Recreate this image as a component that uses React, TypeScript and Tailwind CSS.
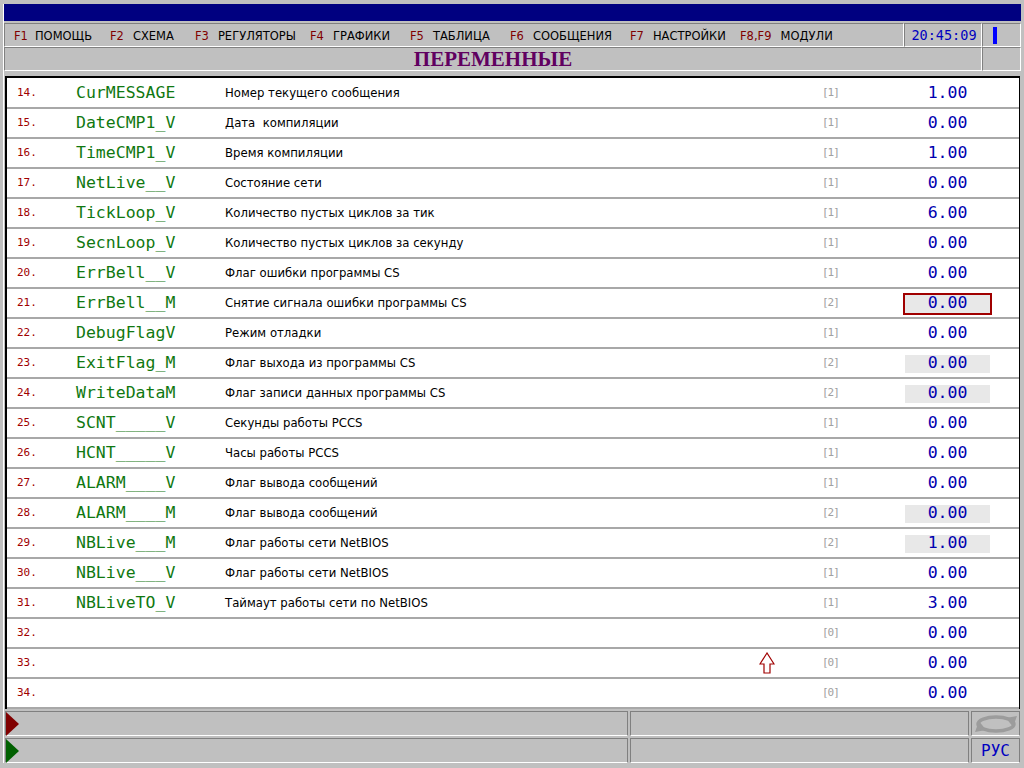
import React from "react";

type Row = {
  n: number;
  name: string;
  desc: string;
  br: string;
  val: string;
  kind?: "box" | "red";
};

const rows: Row[] = [
  { n: 14, name: "CurMESSAGE", desc: "Номер текущего сообщения", br: "[1]", val: "1.00" },
  { n: 15, name: "DateCMP1_V", desc: "Дата\u00a0 компиляции", br: "[1]", val: "0.00" },
  { n: 16, name: "TimeCMP1_V", desc: "Время компиляции", br: "[1]", val: "1.00" },
  { n: 17, name: "NetLive__V", desc: "Состояние сети", br: "[1]", val: "0.00" },
  { n: 18, name: "TickLoop_V", desc: "Количество пустых циклов за тик", br: "[1]", val: "6.00" },
  { n: 19, name: "SecnLoop_V", desc: "Количество пустых циклов за секунду", br: "[1]", val: "0.00" },
  { n: 20, name: "ErrBell__V", desc: "Флаг ошибки программы CS", br: "[1]", val: "0.00" },
  { n: 21, name: "ErrBell__M", desc: "Снятие сигнала ошибки программы CS", br: "[2]", val: "0.00", kind: "red" },
  { n: 22, name: "DebugFlagV", desc: "Режим отладки", br: "[1]", val: "0.00" },
  { n: 23, name: "ExitFlag_M", desc: "Флаг выхода из программы CS", br: "[2]", val: "0.00", kind: "box" },
  { n: 24, name: "WriteDataM", desc: "Флаг записи данных программы CS", br: "[2]", val: "0.00", kind: "box" },
  { n: 25, name: "SCNT_____V", desc: "Секунды работы PCCS", br: "[1]", val: "0.00" },
  { n: 26, name: "HCNT_____V", desc: "Часы работы PCCS", br: "[1]", val: "0.00" },
  { n: 27, name: "ALARM____V", desc: "Флаг вывода сообщений", br: "[1]", val: "0.00" },
  { n: 28, name: "ALARM____M", desc: "Флаг вывода сообщений", br: "[2]", val: "0.00", kind: "box" },
  { n: 29, name: "NBLive___M", desc: "Флаг работы сети NetBIOS", br: "[2]", val: "1.00", kind: "box" },
  { n: 30, name: "NBLive___V", desc: "Флаг работы сети NetBIOS", br: "[1]", val: "0.00" },
  { n: 31, name: "NBLiveTO_V", desc: "Таймаут работы сети по NetBIOS", br: "[1]", val: "3.00" },
  { n: 32, name: "", desc: "", br: "[0]", val: "0.00" },
  { n: 33, name: "", desc: "", br: "[0]", val: "0.00" },
  { n: 34, name: "", desc: "", br: "[0]", val: "0.00" },
];

const menu: { k: string; label: string; w: string; g: string }[] = [
  { k: "F1", label: "ПОМОЩЬ", w: "w-[96px]", g: "ml-[7px]" },
  { k: "F2", label: "СХЕМА", w: "w-[85px]", g: "ml-[9px]" },
  { k: "F3", label: "РЕГУЛЯТОРЫ", w: "w-[115px]", g: "ml-[9px]" },
  { k: "F4", label: "ГРАФИКИ", w: "w-[100px]", g: "ml-[9px]" },
  { k: "F5", label: "ТАБЛИЦА", w: "w-[100px]", g: "ml-[9px]" },
  { k: "F6", label: "СООБЩЕНИЯ", w: "w-[120px]", g: "ml-[9px]" },
  { k: "F7", label: "НАСТРОЙКИ", w: "w-[110px]", g: "ml-[9px]" },
  { k: "F8,F9", label: "МОДУЛИ", w: "w-[120px]", g: "ml-[9px]" },
];

const mono = "font-['DejaVu_Sans_Mono',monospace]";
const sans = "font-['DejaVu_Sans',sans-serif]";
const sunken =
  "border-t border-l border-[#808080] border-r border-b border-r-white border-b-white";

export default function App() {
  return (
    <div className="relative w-[1024px] h-[768px] bg-[#c0c0c0] overflow-hidden pl-[3px] pt-[4px] pr-[3px]">
      <div className="border-l border-white">
        {/* title bar */}
        <div className="h-[17px] bg-[#000080]" />
        {/* menu row */}
        <div className="mt-[2px] flex h-[24px]">
          <div className={`w-[900px] h-full flex items-center pl-[9px] pt-[3px] ${sunken} ${sans} text-[11.5px]`}>
            {menu.map((m) => (
              <div key={m.k} className={`${m.w} flex items-center shrink-0 whitespace-nowrap`}>
                <span className="text-[#800000]">{m.k}</span>
                <span className={`${m.g} text-black`}>{m.label}</span>
              </div>
            ))}
          </div>
          <div className={`w-[78px] h-full flex items-center justify-center pl-[2px] pt-[1px] ${sunken} ${mono} text-[13.5px] text-[#0000c0]`}>
            20:45:09
          </div>
          <div className={`flex-1 h-full flex items-center ${sunken}`}>
            <div className="ml-[10px] w-[4px] h-[17px] bg-[#0000ff]" />
          </div>
        </div>
        {/* header row */}
        <div className="flex h-[24px]">
          <div className={`w-[978px] h-full flex items-center justify-center ${sunken} font-['Liberation_Serif',serif] font-bold text-[21px] text-[#600060] leading-none`}>
            ПЕРЕМЕННЫЕ
          </div>
          <div className={`flex-1 h-full ${sunken}`} />
        </div>
        {/* table */}
        <div className="mt-[5px] ml-[1px] w-[1015px] h-[633px] pt-[1px] bg-white border-l-2 border-t-2 border-r border-black">
          {rows.map((r) => (
            <div key={r.n} className="flex items-center h-[30px] pt-[1px] border-b-2 border-[#a8a8a8]">
              <div className={`w-[69px] pl-[10px] ${mono} text-[11px] text-[#a00000]`}>{r.n}.</div>
              <div className={`w-[149px] ${mono} text-[16.5px] text-[#107810] whitespace-pre`}>{r.name}</div>
              <div className={`w-[597px] ${sans} text-[11.7px] text-black whitespace-pre`}>{r.desc}</div>
              <div className={`w-[83px] ${mono} text-[11px] tracking-[-1px] text-[#a0a0a0]`}>{r.br}</div>
              <div
                className={`flex items-center justify-center ${mono} text-[16.5px] text-[#0000b0] ${
                  r.kind === "red"
                    ? "w-[89px] h-[22px] -ml-[2px] bg-[#e8e8e8] border-2 border-[#a00000]"
                    : r.kind === "box"
                    ? "w-[85px] h-[18px] bg-[#e8e8e8]"
                    : "w-[85px] h-[18px]"
                }`}
              >
                {r.val}
              </div>
            </div>
          ))}
        </div>
        {/* status rows */}
        {[0, 1].map((i) => (
          <div key={i} className="flex h-[25px] mt-[2px] gap-[2px] ml-[1px]">
            <div className="relative w-[623px] h-full border-t border-l border-[#808080] border-r border-b border-r-[#808080] border-b-white">
              <svg className="absolute left-0 top-0" width="14" height="24" viewBox="0 0 14 24">
                <polygon points="0,0 13,12 0,24" fill={i === 0 ? "#800000" : "#006000"} />
              </svg>
            </div>
            <div className="w-[339px] h-full border-t border-l border-[#808080] border-r border-b border-r-[#808080] border-b-white" />
            <div className={`w-[49px] h-full flex items-center justify-center border-t border-l border-[#808080] border-r border-b border-r-[#808080] border-b-white ${mono} text-[16px] text-[#0000c0]`}>
              {i === 0 ? (
                <svg width="46" height="22" viewBox="0 0 46 22">
                  <ellipse cx="23" cy="11" rx="18" ry="7" fill="none" stroke="#9c9c9c" strokeWidth="3.5" />
                  <polygon points="6,8 2,19 13,17" fill="#9c9c9c" />
                  <polygon points="40,14 44,3 33,5" fill="#9c9c9c" />
                </svg>
              ) : (
                "РУС"
              )}
            </div>
          </div>
        ))}
      </div>
      {/* mouse cursor */}
      <svg className="absolute left-[759px] top-[652px]" width="16" height="23" viewBox="0 0 16 23">
        <polygon points="8,1 1,12 5,12 5,21 11,21 11,12 15,12" fill="white" stroke="#a00000" strokeWidth="1.2" />
      </svg>
    </div>
  );
}
